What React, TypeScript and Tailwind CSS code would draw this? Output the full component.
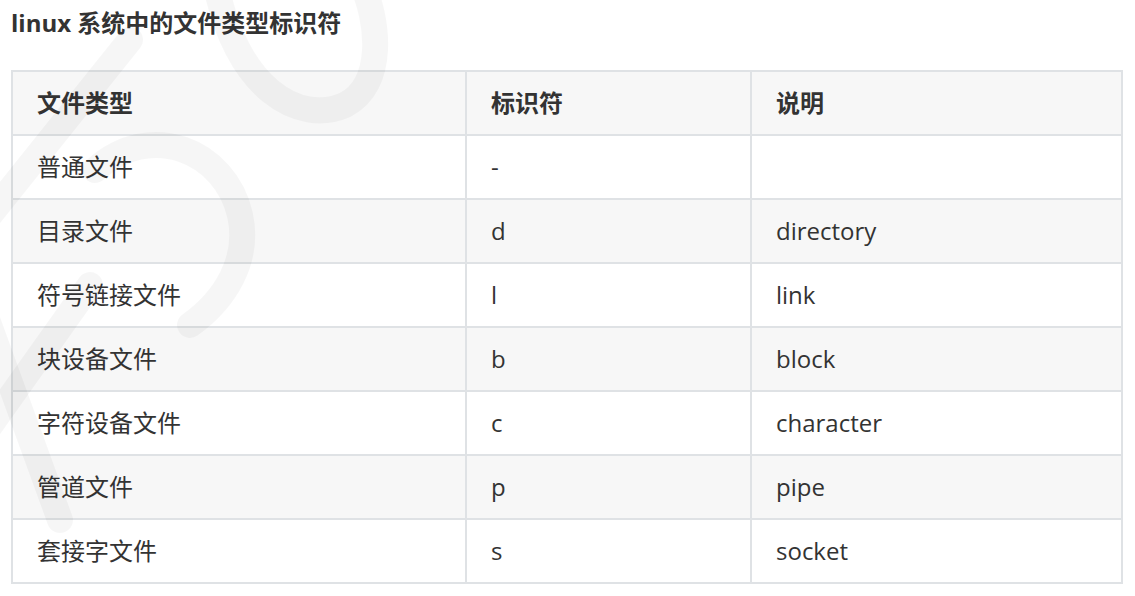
const rows = [
  { type: '普通文件', flag: '-', desc: '' },
  { type: '目录文件', flag: 'd', desc: 'directory' },
  { type: '符号链接文件', flag: 'l', desc: 'link' },
  { type: '块设备文件', flag: 'b', desc: 'block' },
  { type: '字符设备文件', flag: 'c', desc: 'character' },
  { type: '管道文件', flag: 'p', desc: 'pipe' },
  { type: '套接字文件', flag: 's', desc: 'socket' },
];

const font = { fontFamily: '"Open Sans", "Noto Sans CJK SC", sans-serif' };

function Watermark() {
  return (
    <svg
      className="pointer-events-none absolute left-0 top-0"
      width="420"
      height="596"
      viewBox="0 0 420 596"
      fill="none"
    >
      <g stroke="#000" strokeOpacity="0.035" strokeWidth="26" strokeLinecap="round">
        <path d="M215 -20 C235 90 300 125 345 105 C385 85 380 20 360 -20" />
        <path d="M-10 215 L130 40" />
        <path d="M60 520 L-20 300" />
        <path d="M-20 440 L90 285" />
        <path d="M95 170 C150 120 225 150 240 215 C250 260 225 300 190 325" />
      </g>
    </svg>
  );
}

export default function App() {
  return (
    <div className="relative min-h-[596px] w-[1135px] bg-white px-[11px] text-[#333]" style={font}>
      <h1 className="pt-[7px] text-[24px] font-bold leading-8 text-[#333]">linux 系统中的文件类型标识符</h1>

      <div className="mt-[31px] w-[1112px] border-x-2 border-t-2 border-[#dfe2e5]">
        {/* header */}
        <div className="flex h-16 border-b-2 border-[#dfe2e5] bg-[#f7f7f7] text-[24px] font-bold">
          <div className="flex w-[454px] items-center border-r-2 border-[#dfe2e5] pl-6">文件类型</div>
          <div className="flex w-[285px] items-center border-r-2 border-[#dfe2e5] pl-6">标识符</div>
          <div className="flex flex-1 items-center pl-6">说明</div>
        </div>

        {rows.map((r, i) => (
          <div
            key={r.flag}
            className={`flex h-16 border-b-2 border-[#dfe2e5] text-[24px] ${
              i % 2 === 1 ? 'bg-[#f7f7f7]' : 'bg-white'
            }`}
          >
            <div className="flex w-[454px] items-center border-r-2 border-[#dfe2e5] pl-6">{r.type}</div>
            <div className="flex w-[285px] items-center border-r-2 border-[#dfe2e5] pl-6">{r.flag}</div>
            <div className="flex flex-1 items-center pl-6">{r.desc}</div>
          </div>
        ))}
      </div>

      <Watermark />
    </div>
  );
}
